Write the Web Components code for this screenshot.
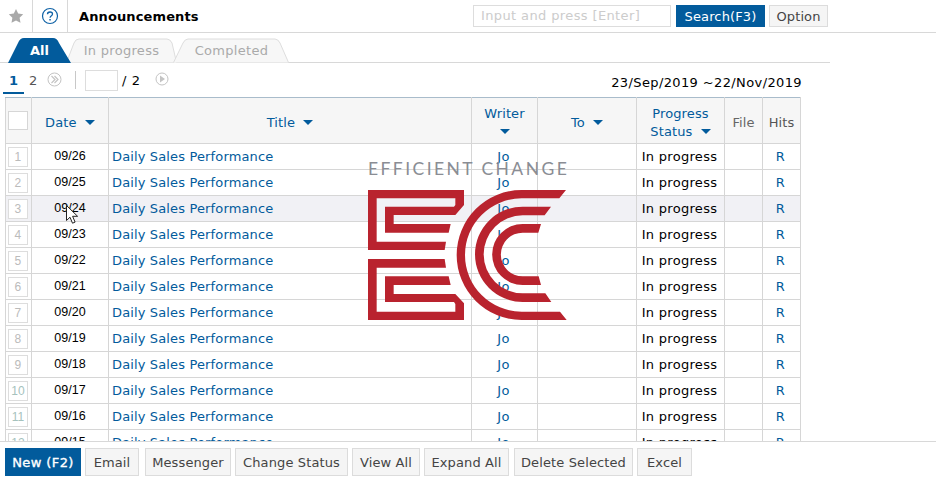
<!DOCTYPE html>
<html>
<head>
<meta charset="utf-8">
<title>Announcements</title>
<style>
html, body { margin: 0; height: 100%; overflow: hidden; background: #fff; }
body { font-family: "DejaVu Sans", sans-serif; font-size: 13px; letter-spacing: .12px; }
</style>
</head>
<body>
<board-page>
	<top-bar></top-bar>
	<tab-strip></tab-strip>
	<pager-bar></pager-bar>
	<board-table></board-table>
	<action-bar slot="footer">
		<ui-button kind="primary" width="76" strong>New (F2)</ui-button>
		<ui-button width="54" style="margin-right:2px">Email</ui-button>
		<ui-button width="86">Messenger</ui-button>
		<ui-button width="113">Change Status</ui-button>
		<ui-button width="68">View All</ui-button>
		<ui-button width="85" style="margin-right:1px">Expand All</ui-button>
		<ui-button width="119">Delete Selected</ui-button>
		<ui-button width="55">Excel</ui-button>
	</action-bar>
	<ec-logo slot="overlay"></ec-logo>
	<mouse-arrow slot="overlay"></mouse-arrow>
</board-page>

<script>
class BoardPage extends HTMLElement {
	constructor() {
		super();
		this.attachShadow({ mode: 'open' });
		this.shadowRoot.innerHTML = `
			<style>
				:host { display: flex; flex-direction: column; position: relative; width: 936px; height: 480px; overflow: hidden; }
				.main { flex: 1; min-height: 0; overflow: hidden; }
			</style>
			<div class="main"><slot></slot></div>
			<slot name="footer"></slot>
			<slot name="overlay"></slot>
		`;
	}
}

class TopBar extends HTMLElement {
	constructor() {
		super();
		this.attachShadow({ mode: 'open' });
		this.shadowRoot.innerHTML = `
			<style>
				:host { display: flex; align-items: center; height: 32px; border-bottom: 1px solid #d8d8d8; }
				.cell { display: flex; align-items: center; justify-content: center; height: 32px; box-sizing: border-box; border-right: 1px solid #d8d8d8; }
				.star { width: 33px; }
				.help { width: 35px; }
				h1 { margin: 0 0 0 11px; font-size: 13px; font-weight: bold; color: #000; flex: 1; }
				.input { box-sizing: border-box; width: 198px; height: 22px; border: 1px solid #ddd; color: #ccc; padding: 0 7px; line-height: 20px; margin-right: 5px; white-space: nowrap; overflow: hidden; letter-spacing: .38px; }
				ui-button { margin-right: 4px; }
				ui-button:last-child { margin-right: 108px; }
			</style>
			<div class="cell star">
				<svg width="16" height="16" viewBox="0 0 16 16"><path d="M8 1l2.200 4.600 5 .7-3.600 3.500.9 5L8 12.400l-4.500 2.400.9-5L.8 6.300l5-.7z" fill="#a9a9a9"/></svg>
			</div>
			<div class="cell help">
				<svg width="18" height="18" viewBox="0 0 18 18"><circle cx="9" cy="9" r="7.500" fill="none" stroke="#0f62a6" stroke-width="1.200"/><path d="M6.500 7.200C6.500 5.700 7.600 5 9 5s2.500.8 2.500 2c0 1-.6 1.500-1.300 2-.7.5-1.100.9-1.100 1.800" fill="none" stroke="#0f62a6" stroke-width="1.300"/><rect x="8.300" y="12" width="1.500" height="1.500" fill="#0f62a6"/></svg>
			</div>
			<h1>Announcements</h1>
			<div class="input">Input and press [Enter]</div>
			<ui-button kind="primary" width="89" height="22" flat>Search(F3)</ui-button>
			<ui-button width="59" height="22" flat>Option</ui-button>
		`;
	}
}

class UiButton extends HTMLElement {
	constructor() {
		super();
		const primary = this.getAttribute('kind') === 'primary';
		const w = this.getAttribute('width');
		const h = this.getAttribute('height') || 28;
		const strong = this.hasAttribute('strong');
		const flat = this.hasAttribute('flat');
		this.attachShadow({ mode: 'open' });
		this.shadowRoot.innerHTML = `
			<style>
				:host { display: inline-flex; align-items: center; justify-content: center; box-sizing: border-box; width: ${w}px; height: ${h}px;
					font-size: 13px; white-space: nowrap; padding-top: ${flat ? 0 : 1}px;
					${strong ? '-webkit-text-stroke: .35px #fff; letter-spacing: .4px;' : ''}
					background: ${primary ? '#025b9c' : '#f5f5f5'}; color: ${primary ? '#fff' : '#444'};
					border: 1px solid ${primary ? '#025b9c' : '#dcdcdc'}; }
			</style>
			<slot></slot>
		`;
	}
}

class TabStrip extends HTMLElement {
	constructor() {
		super();
		this.attachShadow({ mode: 'open' });
		this.shadowRoot.innerHTML = `
			<style>
				:host { display: block; width: 830px; height: 25px; margin-top: 5px; box-sizing: border-box; border-bottom: 1px solid #d8d8d8; padding-left: 8px; }
				.row { display: flex; height: 24px; }
				.tab { position: relative; height: 24px; display: flex; align-items: center; justify-content: center; color: #aaa; letter-spacing: .3px; }
				.tab svg { position: absolute; left: 0; top: 0; }
				.tab span { position: relative; }
				.all { width: 63px; color: #fff; font-weight: bold; letter-spacing: 0; }
				.prog { width: 111px; margin-left: -5px; }
				.comp { width: 116px; margin-left: -4px; padding-left: 1px; box-sizing: border-box; }
			</style>
			<div class="row">
				<div class="tab prog" style="order:2">
					<svg width="111" height="25" viewBox="0 0 111 25"><path d="M.5 24.500L8 5q1.500-4 5-4h88q3 0 5 4l4.500 19.500" fill="#f7f7f7" stroke="#ddd"/></svg>
					<span>In progress</span>
				</div>
				<div class="tab comp" style="order:3">
					<svg width="116" height="25" viewBox="0 0 116 25"><path d="M.5 24.500L10 5q2-4 5-4h87q3 0 5 4l8.500 19.500" fill="#f7f7f7" stroke="#ddd"/></svg>
					<span>Completed</span>
				</div>
				<div class="tab all" style="order:1;z-index:1">
					<svg width="63" height="25" viewBox="0 0 63 25"><path d="M0 25L10 5q2-5 6-5h29q4 0 6 5l12 20z" fill="#025b9c"/></svg>
					<span>All</span>
				</div>
			</div>
		`;
	}
}

class PagerBar extends HTMLElement {
	constructor() {
		super();
		this.attachShadow({ mode: 'open' });
		this.shadowRoot.innerHTML = `
			<style>
				:host { display: flex; align-items: center; width: 802px; height: 34px; color: #000; }
				.cur { box-sizing: border-box; width: 21px; margin-left: 3px; text-align: center; color: #025b9c; font-weight: bold; height: 28px; line-height: 30px; border-bottom: 2px solid #025b9c; }
				.num { margin-left: 5px; width: 11px; color: #555; }
				.more { margin-left: 7px; display: flex; margin-top: -1px; }
				.sep { width: 1px; height: 18px; background: #c8c8c8; margin: 0 9px 0 13px; }
				.box { box-sizing: border-box; width: 33px; height: 21px; border: 1px solid #ddd; }
				.total { margin-left: 4px; letter-spacing: .6px; }
				.play { margin-left: 14px; display: flex; margin-top: -3px; }
				.range { margin-left: auto; padding-top: 5px; letter-spacing: .38px; }
			</style>
			<div class="cur">1</div>
			<div class="num">2</div>
			<div class="more">
				<svg width="15" height="15" viewBox="0 0 15 15" fill="none" stroke="#c4c4c4"><circle cx="7.500" cy="7.500" r="6.500"/><path d="M4.500 4l3.500 3.500L4.500 11M7.500 4L11 7.500 7.500 11" stroke-width="1.200"/></svg>
			</div>
			<div class="sep"></div>
			<div class="box"></div>
			<div class="total">/ 2</div>
			<div class="play">
				<svg width="14" height="14" viewBox="0 0 14 14"><circle cx="7" cy="7" r="6" fill="none" stroke="#c4c4c4"/><path d="M5 3.500l5 3.500-5 3.500z" fill="#c4c4c4"/></svg>
			</div>
			<div class="range">23/Sep/2019 ~22/Nov/2019</div>
		`;
	}
}

class BoardTable extends HTMLElement {
	constructor() {
		super();
		this.attachShadow({ mode: 'open' });
		const arrow = '<i class="sort"></i>';
		let rows = '';
		for (let i = 0; i < 12; i++) {
			rows += `
				<tr class="${i === 2 ? 'hover' : ''}">
					<td><b class="no ${i > 8 ? 'wide' : ''}">${i + 1}</b></td>
					<td class="date">09/${26 - i}</td>
					<td class="title"><a>Daily Sales Performance</a></td>
					<td class="c"><a>Jo</a></td>
					<td></td>
					<td class="c">In progress</td>
					<td></td>
					<td class="c"><a>R</a></td>
				</tr>`;
		}
		this.shadowRoot.innerHTML = `
			<style>
				:host { display: block; margin-left: 5px; width: 796px; }
				table { table-layout: fixed; border-collapse: collapse; width: 796px; font-size: 13px; }
				th, td { border: 1px solid #d6d6d6; padding: 0; text-align: center; overflow: hidden; white-space: nowrap; }
				thead tr { height: 46px; background: #f6f6f6; }
				th { font-weight: normal; color: #025b9c; line-height: 18px; white-space: normal; border-top-color: #a9bccb; padding-top: 5px; box-sizing: border-box; }
				th.plain { color: #666; }
				tbody tr { height: 26px; }
				.hover { background: #f1f1f5; }
				a { color: #025b9c; }
				.title { text-align: left; padding-left: 3px; letter-spacing: .14px; }
				.date { font-family: "Liberation Sans", sans-serif; font-size: 12.500px; color: #000; letter-spacing: 0; padding-bottom: 1px; }
				.c { color: #000; padding-right: 2px; letter-spacing: .3px; }
				.sort { display: inline-block; margin-left: 4px; width: 0; height: 0; border: 5px solid transparent; border-top: 5px solid #025b9c; border-bottom: 0; vertical-align: 2px; }
				.stack { margin-left: 0; }
				.check { display: block; box-sizing: border-box; width: 20px; height: 19px; margin: -5px 0 0 2px; border: 1px solid #d6d6d6; background: #fff; }
				.no { display: flex; align-items: center; justify-content: center; box-sizing: border-box; width: 20px; height: 20px; margin-left: 2px; border: 1px solid #ddd; background: #fff; color: #bbb; font-weight: normal; font-family: "Liberation Sans", sans-serif; font-size: 12px; }
				.no.wide { color: #a5c2bd; }
			</style>
			<table>
				<colgroup><col style="width:26px"><col style="width:77px"><col style="width:363px"><col style="width:66px"><col style="width:99px"><col style="width:88px"><col style="width:38px"><col style="width:38px"></colgroup>
				<thead>
					<tr>
						<th><span class="check"></span></th>
						<th>Date ${arrow}</th>
						<th>Title ${arrow}</th>
						<th>Writer<br><i class="sort stack"></i></th>
						<th>To ${arrow}</th>
						<th>Progress<br>Status ${arrow}</th>
						<th class="plain">File</th>
						<th class="plain"><span style="color:#555">Hits</span></th>
					</tr>
				</thead>
				<tbody>${rows}</tbody>
			</table>
		`;
	}
}

class ActionBar extends HTMLElement {
	constructor() {
		super();
		this.attachShadow({ mode: 'open' });
		this.shadowRoot.innerHTML = `
			<style>
				:host { display: flex; gap: 4px; height: 39px; box-sizing: border-box; padding: 6px 0 0 5px; border-top: 1px solid #d8d8d8; background: #fff; }
			</style>
			<slot></slot>
		`;
	}
}

class EcLogo extends HTMLElement {
	constructor() {
		super();
		this.attachShadow({ mode: 'open' });
		this.shadowRoot.innerHTML = `
			<style>
				:host { position: absolute; left: 350px; top: 150px; width: 240px; height: 180px; display: block; pointer-events: none; }
				.name { position: absolute; left: 18px; top: 9px; font-family: "Lato", sans-serif; font-weight: 400; font-size: 17.500px; line-height: 19px; letter-spacing: 2.430px; color: #8a8d94; white-space: nowrap; }
				svg { position: absolute; left: 0; top: 0; }
			</style>
			<div class="name">EFFICIENT CHANGE</div>
			<svg width="240" height="180" viewBox="0 0 720 540" fill="#b9232e">
				<path d="M54 120H342V165L316 195H131V222H302L296 248H105V170H312L316 165V145H80V275H288L284 300H54Z"/>
				<path d="M54 510H342V460L316 432H131V405H302L296 379H105V456H312L316 462V485H80V353H288L284 327H54Z"/>
				<path d="M648 120H515A195 195 0 0 0 515 510H650L630 485H515A170 170 0 0 1 515 145H628Z"/>
				<path d="M603 170H518A143 143 0 0 0 518 456H604L586 430H518A117 117 0 0 1 518 196H584Z"/>
				<path d="M573 222H518A91.500 91.500 0 0 0 518 405H573L566 379H518A65.500 65.500 0 0 1 518 248H565Z"/>
			</svg>
		`;
	}
}

class MouseArrow extends HTMLElement {
	constructor() {
		super();
		this.attachShadow({ mode: 'open' });
		this.shadowRoot.innerHTML = `
			<style>
				:host { position: absolute; left: 66px; top: 205px; display: block; width: 13px; height: 20px; }
			</style>
			<svg width="13" height="20" viewBox="0 0 13 20"><path d="M.5.5v15l3.500-3.300 2.500 6 2.600-1.100-2.500-5.800h5z" fill="#fff" stroke="#222"/></svg>
		`;
	}
}

customElements.define('board-page', BoardPage);
customElements.define('top-bar', TopBar);
customElements.define('ui-button', UiButton);
customElements.define('tab-strip', TabStrip);
customElements.define('pager-bar', PagerBar);
customElements.define('board-table', BoardTable);
customElements.define('action-bar', ActionBar);
customElements.define('ec-logo', EcLogo);
customElements.define('mouse-arrow', MouseArrow);
</script>
</body>
</html>
